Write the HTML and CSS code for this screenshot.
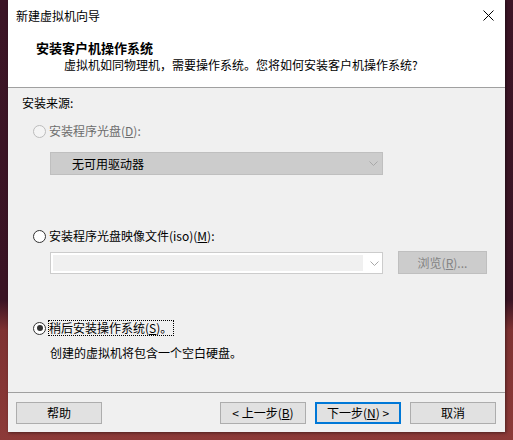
FILE: index.html
```html
<!DOCTYPE html>
<html lang="zh-CN">
<head>
<meta charset="utf-8">
<title>新建虚拟机向导</title>
<link rel="stylesheet" href="styles.css">
</head>
<body>
<div class="window">
  <div class="titlebar">
    <span class="title">新建虚拟机向导</span>
    <svg class="close" width="11" height="11" viewBox="0 0 11 11"><path d="M0.5 0.5 L10.5 10.5 M10.5 0.5 L0.5 10.5" stroke="#000" stroke-width="1"/></svg>
  </div>
  <div class="header">
    <div class="heading">安装客户机操作系统</div>
    <div class="subtitle">虚拟机如同物理机，需要操作系统。您将如何安装客户机操作系统?</div>
  </div>
  <div class="content">
    <div class="source">安装来源:</div>

    <div class="option disabled opt1">
      <span class="radio"></span>
      <span class="label">安装程序光盘(<u>D</u>):</span>
    </div>
    <div class="combo combo-disabled">
      <span class="combo-text">无可用驱动器</span>
      <svg class="arrow" width="9" height="5" viewBox="0 0 9 5"><path d="M0.5 0.5 L4.5 4.5 L8.5 0.5" fill="none" stroke="#a8a8a8"/></svg>
    </div>

    <div class="option opt2">
      <span class="radio"></span>
      <span class="label">安装程序光盘映像文件(iso)(<u>M</u>):</span>
    </div>
    <div class="iso-row">
      <div class="combo combo-iso">
        <span class="iso-field"></span>
        <svg class="arrow" width="9" height="5" viewBox="0 0 9 5"><path d="M0.5 0.5 L4.5 4.5 L8.5 0.5" fill="none" stroke="#a8a8a8"/></svg>
      </div>
      <div class="btn-browse">浏览(<u>R</u>)...</div>
    </div>

    <div class="option opt3">
      <span class="radio checked"></span>
      <span class="label focus">稍后安装操作系统(<u>S</u>)。</span>
    </div>
    <div class="desc">创建的虚拟机将包含一个空白硬盘。</div>
  </div>
  <div class="footer">
    <div class="btn">帮助</div>
    <div class="spacer"></div>
    <div class="btn">&lt; 上一步(<u>B</u>)</div>
    <div class="btn btn-default">下一步(<u>N</u>) &gt;</div>
    <div class="btn">取消</div>
  </div>
</div>
</body>
</html>
```
FILE: styles.css
```css
html, body {
  margin: 0;
  padding: 0;
}
body {
  width: 513px;
  height: 440px;
  overflow: hidden;
  background: linear-gradient(to bottom, #3c1526 0px, #3a1424 300px, #7e3232 330px, #8c3a38 440px);
  font-family: "Noto Sans CJK SC", "Noto Sans", sans-serif;
  font-size: 12px;
  color: #000;
}
.window {
  margin-left: 8px;
  width: 497px;
  height: 432px;
  display: flex;
  flex-direction: column;
  background: #f0f0f0;
  box-shadow: 1px 1px 3px rgba(0,0,0,0.45);
}
.titlebar {
  height: 31px;
  background: #fff;
  display: flex;
  align-items: center;
  padding-left: 8px;
  padding-right: 10px;
  box-sizing: border-box;
}
.title {
  flex: 1;
  line-height: 16px;
  margin-top: 1px;
}
.close {
  display: block;
  margin-right: 1px;
}
.header {
  height: 57px;
  background: #fff;
  border-bottom: 1px solid #a0a0a0;
  box-sizing: border-box;
  padding-top: 9px;
  padding-left: 28px;
}
.heading {
  font-weight: bold;
  font-size: 13px;
  line-height: 16px;
}
.subtitle {
  line-height: 16px;
  margin-top: 1px;
  padding-left: 28px;
}
.content {
  height: 305px;
  box-sizing: border-box;
  border-bottom: 1px solid #a0a0a0;
  padding-top: 7px;
  padding-left: 14px;
  display: flex;
  flex-direction: column;
  align-items: flex-start;
}
.source {
  line-height: 16px;
}
.option {
  display: flex;
  align-items: center;
  height: 16px;
  margin-left: 11px;
}
.opt1 { margin-top: 12px; }
.opt2 { margin-top: 53px; }
.opt3 { margin-top: 46px; }
.radio {
  width: 11px;
  height: 11px;
  border: 1px solid #333;
  border-radius: 50%;
  background: #fff;
  margin-right: 3px;
  position: relative;
}
.disabled .radio {
  border-color: #bcbcbc;
  background: #f4f4f4;
}
.disabled .label {
  color: #6d6d6d;
}
.radio.checked::after {
  content: "";
  position: absolute;
  left: 2.5px;
  top: 2.5px;
  width: 6px;
  height: 6px;
  border-radius: 50%;
  background: #333;
}
.label {
  line-height: 14px;
}
.label.focus {
  outline: 1px dotted #000;
  outline-offset: 0px;
  padding: 0 1px 0 0;
}
.combo {
  margin-left: 28px;
  width: 333px;
  box-sizing: border-box;
  display: flex;
  align-items: center;
  position: relative;
}
.combo-disabled {
  margin-top: 13px;
  height: 23px;
  background: #cccccc;
  border: 1px solid #bfbfbf;
  padding-left: 21px;
}
.combo-disabled .arrow {
  margin-right: 4px;
}
.combo-text {
  flex: 1;
  line-height: 16px;
}
.arrow {
  display: block;
  margin-right: 1px;
}
.iso-row {
  margin-top: 7px;
  margin-left: 28px;
  display: flex;
  align-items: flex-start;
}
.combo-iso {
  margin-left: 0;
  margin-top: 1px;
  height: 22px;
  background: #fff;
  border: 1px solid #cccccc;
  padding: 2px;
}
.iso-field {
  flex: 1;
  height: 16px;
  background: #f0f0f0;
  margin-right: 7px;
}
.btn-browse {
  margin-left: 15px;
  width: 89px;
  height: 23px;
  box-sizing: border-box;
  background: #cccccc;
  border: 1px solid #bfbfbf;
  color: #838383;
  display: flex;
  align-items: center;
  justify-content: center;
  line-height: 16px;
}
.desc {
  margin-top: 9px;
  margin-left: 28px;
  line-height: 16px;
}
.footer {
  flex: 1;
  display: flex;
  align-items: flex-start;
  padding: 9px 9px 0 8px;
  gap: 9px;
}
.spacer {
  flex: 1;
}
.btn {
  width: 86px;
  height: 22px;
  box-sizing: border-box;
  background: #e1e1e1;
  border: 1px solid #adadad;
  display: flex;
  align-items: center;
  justify-content: center;
  line-height: 16px;
}
.btn-default {
  border: 2px solid #0078d7;
}
u {
  text-underline-offset: 1px;
}
```
